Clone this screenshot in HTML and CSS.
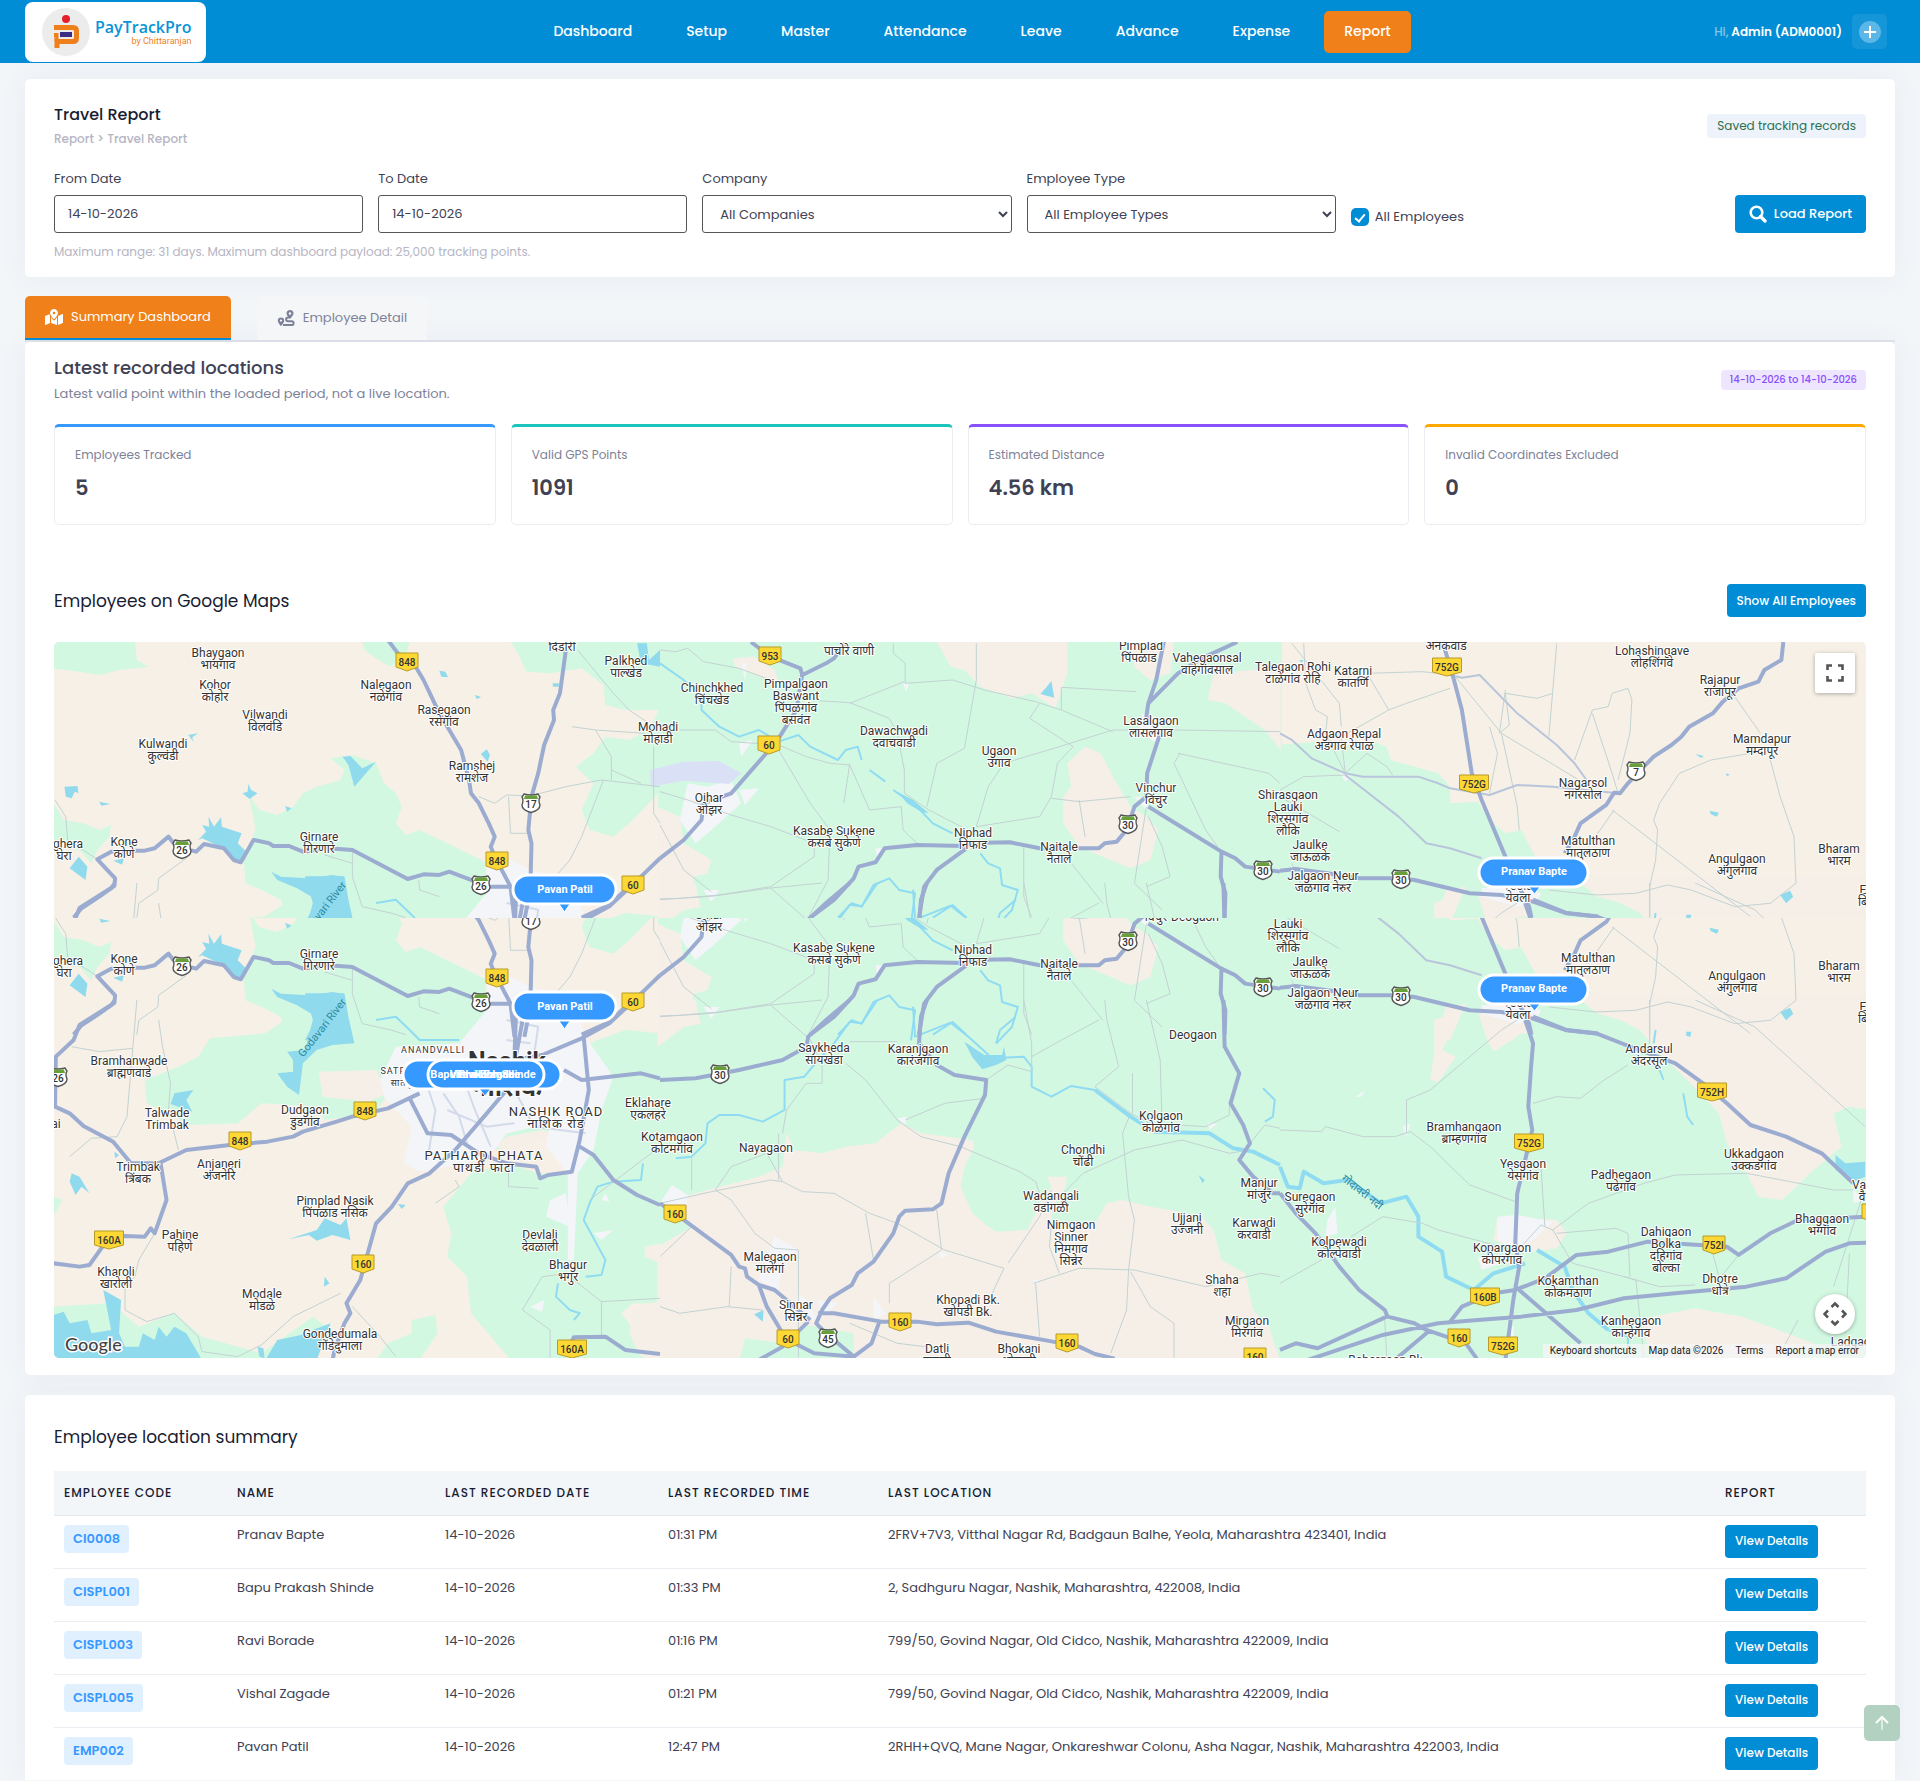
FILE: index.html
```html
<!DOCTYPE html>
<html lang="en">
<head>
<meta charset="utf-8">
<meta name="viewport" content="width=device-width, initial-scale=1">
<title>Travel Report - PayTrackPro</title>
<link rel="stylesheet" href="styles.css">
</head>
<body>
<header class="topbar">
  <a class="brand" href="#" aria-label="PayTrackPro">
    <svg class="brand-mark" width="48" height="48" viewBox="0 0 48 48" aria-hidden="true">
      <circle cx="24" cy="24" r="24" fill="#ececec"/>
      <circle cx="24" cy="11" r="4" fill="#e5202b"/>
      <path d="M12 19.500H31Q34.500 19.500 34.500 23V30Q34.500 33.500 31 33.500H15V40" fill="none" stroke="#ef7f1a" stroke-width="5"/>
      <path d="M12 27H14.500V33" fill="none" stroke="#ef7f1a" stroke-width="4"/>
      <rect x="18" y="24" width="12" height="5" fill="#3b2d83"/>
    </svg>
    <span class="brand-text"><span class="brand-name">PayTrackPro</span><span class="brand-by">by Chittaranjan</span></span>
  </a>
  <nav class="menu" aria-label="Main">
    <a href="#">Dashboard</a><a href="#">Setup</a><a href="#">Master</a><a href="#">Attendance</a><a href="#">Leave</a><a href="#">Advance</a><a href="#">Expense</a><a class="active" href="#">Report</a>
  </nav>
  <div class="user">
    <span><span class="hi">Hi,</span> Admin (ADM0001)</span>
    <button class="user-add" type="button" aria-label="Add">
      <svg width="22" height="22" viewBox="0 0 22 22"><circle cx="11" cy="11" r="11" fill="#5cb6e6"/><path d="M11 5V17M5 11H17" stroke="#fff" stroke-width="2"/></svg>
    </button>
  </div>
</header>

<main>
<section class="card filters">
  <div class="card-head">
    <div>
      <h1>Travel Report</h1>
      <p class="crumbs">Report &gt; Travel Report</p>
    </div>
    <span class="pill pill-saved">Saved tracking records</span>
  </div>
  <form class="filter-grid">
    <div class="field"><label for="from">From Date</label><input id="from" type="text" value="14-10-2026"></div>
    <div class="field"><label for="to">To Date</label><input id="to" type="text" value="14-10-2026"></div>
    <div class="field"><label for="company">Company</label><select id="company"><option>All Companies</option></select></div>
    <div class="field"><label for="etype">Employee Type</label><select id="etype"><option>All Employee Types</option></select></div>
    <div class="filter-actions">
      <label class="check"><input type="checkbox" checked> All Employees</label>
      <button class="btn btn-load" type="button">
        <svg width="18" height="18" viewBox="0 0 18 18" aria-hidden="true"><circle cx="7.500" cy="7.500" r="5.800" fill="none" stroke="#fff" stroke-width="2.600"/><path d="M11.500 11.500L16 16" stroke="#fff" stroke-width="3.400" stroke-linecap="round"/></svg>
        Load Report
      </button>
    </div>
  </form>
  <p class="help">Maximum range: 31 days. Maximum dashboard payload: 25,000 tracking points.</p>
</section>

<div class="tabs" role="tablist">
  <button class="tab tab-active" type="button" role="tab" aria-selected="true">
    <svg width="18" height="16" viewBox="0 0 576 512" aria-hidden="true"><path fill="currentColor" d="M288 0c-69.600 0-126 56.400-126 126 0 56.300 82.400 158.800 113.900 196 6.400 7.500 17.800 7.500 24.200 0C331.600 284.800 414 182.300 414 126 414 56.400 357.600 0 288 0zm0 168a42 42 0 110-84 42 42 0 010 84zM20.100 216A32 32 0 000 245.700V496c0 11.300 11.400 19 21.900 14.900L160 448V214.900c-8.800-16-16.100-31.500-21.300-46.400L20.100 216zM288 359.700c-14.100 0-27.400-6.200-36.500-17-19.700-23.200-40.600-49.600-59.500-76.700v182l192 64V266c-18.900 27.100-39.800 53.500-59.500 76.700a47.900 47.900 0 01-36.500 17zM554.100 161.200L416 224v288l139.900-56A32 32 0 00576 426.300V176c0-11.300-11.400-19-21.900-14.800z"/></svg>
    Summary Dashboard
  </button>
  <button class="tab" type="button" role="tab" aria-selected="false">
    <svg width="18" height="18" viewBox="0 0 18 18" aria-hidden="true"><path fill="currentColor" d="M13 1a3.500 3.500 0 013.500 3.500C16.500 6.500 13 10 13 10S9.500 6.500 9.500 4.500A3.500 3.500 0 0113 1zM4 8.500a3.200 3.200 0 013.200 3.200C7.200 13.800 4 17 4 17S.8 13.800.8 11.700A3.200 3.200 0 014 8.500z"/><circle cx="13" cy="4.500" r="1.200" fill="#f8f8f8"/><circle cx="4" cy="11.600" r="1.100" fill="#f8f8f8"/><path d="M12.500 8.500H11a1.800 1.800 0 000 3.700h3.600a1.900 1.900 0 010 3.900H6" fill="none" stroke="currentColor" stroke-width="2"/></svg>
    Employee Detail
  </button>
</div>

<section class="card summary">
  <div class="card-head">
    <div>
      <h2 class="lead">Latest recorded locations</h2>
      <p class="sub">Latest valid point within the loaded period, not a live location.</p>
    </div>
    <span class="pill pill-range">14-10-2026 to 14-10-2026</span>
  </div>
  <div class="stats">
    <div class="stat stat-blue"><span>Employees Tracked</span><strong>5</strong></div>
    <div class="stat stat-teal"><span>Valid GPS Points</span><strong>1091</strong></div>
    <div class="stat stat-purple"><span>Estimated Distance</span><strong>4.56 km</strong></div>
    <div class="stat stat-amber"><span>Invalid Coordinates Excluded</span><strong>0</strong></div>
  </div>
  <div class="map-head">
    <h3>Employees on Google Maps</h3>
    <button class="btn btn-sm" type="button">Show All Employees</button>
  </div>
  <div class="map">
    <svg class="map-canvas" viewBox="0 0 1812 716" preserveAspectRatio="xMidYMid slice" role="img" aria-label="Map of employee locations around Nashik">
      <defs>
        <g id="y3"><path d="M-11 -9H11V5L0 9L-11 5Z" fill="#fdd835" stroke="#b79a2a"/></g>
        <g id="y4"><path d="M-14.500 -9H14.500V5L0 9L-14.500 5Z" fill="#fdd835" stroke="#b79a2a"/></g>
        <g id="gs"><path d="M-7 -9Q0 -7 7 -9L9 -6Q7 -3 9 2Q9 7 0 9.500Q-9 7 -9 2Q-7 -3 -9 -6Z" fill="#fff" stroke="#555" stroke-width="1.400"/><path d="M-6 -7.500H6L7 -4H-7Z" fill="#689f38"/></g>
        <g id="terrain">
          <rect width="1812" height="620" fill="#f6f0e6"/>
          <g class="green">
            <rect x="604" width="624" height="620"/>
            <rect x="1224" y="240" width="588" height="380"/>
            <g transform="matrix(.3954 0 0 .3333 -14 -12)">
              <path d="M34 34H240L245 90 275 110 200 120 150 135 100 125 34 115ZM815 34H935L925 80 885 110 850 85 820 60ZM1190 34H1570V240L1480 240 1430 225 1425 165 1370 115 1290 130 1230 125 1215 85ZM34 520L60 570 110 580 150 600 180 585 175 620 145 660 130 700 100 660 34 650ZM1430 320L1490 330 1540 300 1570 230V480L1540 520 1490 580 1450 620 1390 600 1370 540 1400 460 1355 410 1400 370Z"/>
              <path d="M735 385L790 375 850 400 870 460 900 490 915 530 900 580 925 615 960 600 1030 640 1125 695 1130 790 1120 900H630L610 810 570 785 520 760 515 690 545 600 530 500 555 540 600 555 640 530 665 490 700 470 760 450 770 420Z"/>
            </g>
            <g transform="matrix(.3954 0 0 .3333 -14 241)">
              <path d="M600 -20L620 60 570 100 430 115 400 170 350 200 265 240 270 310 380 375 500 370 560 310 700 320 720 360 850 340 880 280 920 140 1130 60V-20ZM1020 620L1090 520 1180 490 1260 520 1340 520 1350 370 1390 130 1480 90 1570 100V910L1500 910 1470 940 1510 1000 1530 1080H1190L1090 940 1080 830 1030 770 1040 700ZM850 1080L880 1030 940 1000 940 960 1000 945 1005 1000 960 1080ZM34 920L180 910 250 980 340 940 410 1010 560 1060 690 950 735 990 690 1080H34ZM1140 450L1180 400 1290 370 1300 400 1200 440ZM34 590L55 600 34 650Z"/>
            </g>
            <g transform="matrix(.3954 0 0 .3333 1226 -12)">
              <path d="M-6 345L90 335 140 350 240 335 270 350 280 390 400 430 430 470 430 520 500 515 530 570 570 610 610 600 650 690 720 690 790 740 870 810 920 860H-6Z"/>
            </g>
          </g>
          <g class="sand">
            <g transform="matrix(.3954 0 0 .3333 606 -12)"><path d="M700 34H1030V130L1000 235 940 190 890 205 810 170 770 120 735 110ZM185 85L240 80 290 120 300 155 250 140 190 110ZM1075 350L1115 370 1145 440 1190 530 1230 560 1260 600 1240 690 1190 715 1140 690 1060 650 1020 580 1020 500 1040 470 1030 400ZM-6 530L50 560 60 640 130 690 120 730 85 740 80 790 105 830 60 840 -6 900ZM1190 34H1300L1290 130 1240 150 1200 110ZM1400 130L1500 120 1570 110V360L1530 300 1480 260 1430 220 1385 210Z"/></g>
            <g transform="matrix(.3954 0 0 .3333 606 241)"><path d="M-6 0H90L100 60 40 80 -6 130ZM320 400L340 450 410 460 470 440 545 430 610 370 660 400 790 420 795 440 770 500 760 560 790 640 830 680 850 695 930 690 965 600 990 560 980 530 1030 530 1020 580 990 620 990 670 1100 670 1130 610 1170 600 1240 620 1290 630 1370 650 1400 690 1420 780 1480 820 1500 930 1540 980 1568 1080H-6V740L80 680 30 640 60 590 120 570 250 530 310 500Z"/></g>
            <g transform="matrix(.3954 0 0 .3333 -14 241)"><path d="M705 215L850 210 880 280 830 305 715 290ZM1500 930L1570 900V1070H1520L1490 1000ZM1150 440L1180 410 1270 390 1300 400 1200 450ZM1530 740L1568 730V790L1530 770Z"/></g>
            <g transform="matrix(.3954 0 0 .3333 1226 -12)"><path d="M420 780L470 770 430 880H390ZM540 820L610 800 630 860H530Z"/></g>
            <g transform="matrix(.3954 0 0 .3333 1226 241)"><path d="M740 -20H1490V330L1440 320 1400 340 1420 440 1340 520 1270 600 1210 590 1180 520 1130 430 1110 340 1030 240 960 160 910 90 860 60 800 40ZM500 30L620 60 600 110 540 155 520 110ZM390 60L460 30 410 150 445 170 400 245 380 240 390 160ZM900 960L1050 925 1170 950 1350 1030 1300 1080H950ZM550 650L700 660 725 700 700 745 620 760 540 720Z"/></g>
          </g>
          <g transform="matrix(.3954 0 0 .3333 606 241)"><path class="green" d="M200 1080L215 1015 310 1030 370 975 490 1000 490 1080Z"/></g>
          <g class="town">
            <g transform="matrix(.3954 0 0 .3333 -14 241)"><path d="M860 240L900 140 1060 130 1130 30 1130 -60 1190 -70 1240 -40 1350 0 1380 110 1450 230 1420 330 1400 450 1360 520 1350 780 1335 780 1335 520 1280 440 1290 370 1180 400 1150 450 1080 490 960 515 920 490 940 380 870 290ZM1290 600L1330 580 1340 680 1280 650ZM1240 920L1275 900 1270 935ZM1420 600L1430 580 1440 605ZM1400 700L1450 690 1420 720Z"/></g>
            <g transform="matrix(.3954 0 0 .3333 606 -12)"><path d="M70 460L120 470 180 450 205 520 130 600 90 640 50 570ZM200 480L250 475 215 525ZM200 340L235 330 205 380ZM205 100L220 100 215 150ZM110 780L150 780 130 815ZM545 655L570 655 550 690ZM1220 250L1275 270 1260 340 1210 310ZM1200 500L1240 500 1230 540ZM615 160L630 160 622 185Z"/></g>
            <g transform="matrix(.3954 0 0 .3333 606 241)"><path d="M30 555L70 585 65 630 0 610ZM290 710L350 750 310 780 300 870 250 840ZM350 880L370 900 400 960 330 960ZM400 900L450 910 410 950ZM540 890L570 940 540 960ZM600 355L625 350 620 375ZM705 750L730 765 710 775ZM1385 370L1410 370 1390 390ZM945 840L960 840 950 860Z"/></g>
            <g transform="matrix(.3954 0 0 .3333 1226 -12)"><path d="M510 775L600 765 660 790 650 815 600 830 510 800ZM150 425L180 440 165 455Z"/></g>
            <g transform="matrix(.3954 0 0 .3333 1226 241)"><path d="M550 650L600 645 690 665 640 720 600 750 550 720ZM120 660L140 620 145 700 115 710ZM310 380L330 370 320 410ZM575 980L592 980 590 1030 572 1040ZM1450 570L1480 600 1450 610ZM190 290L215 272 205 290ZM500 770L560 790 510 810Z"/></g>
          </g>
          <g class="water">
            <g transform="matrix(.3954 0 0 .3333 -14 -12)"><path d="M400 630L420 605 410 585 428 590 426 560 440 590 458 562 460 590 510 610 500 640 522 665 508 695 480 680 455 650 410 625ZM765 380L785 378 815 415 850 395 795 470 780 405ZM512 490L525 485 527 462 534 480 550 490 530 507ZM62 470L95 468 97 490 88 485 80 505 65 500ZM150 515L178 522 155 527ZM75 715L98 680 120 710 115 750ZM185 692L212 685 208 704ZM585 725L610 740 680 745 740 735 768 740 775 800 790 880H670L700 810 650 775 600 750ZM620 528L636 535 625 545ZM1010 122L1025 125 1032 142 1015 140ZM1100 195L1115 200 1105 208ZM1115 372L1130 358 1138 375 1132 395ZM1510 40H1535L1540 90 1568 60V110L1520 100ZM1297 160H1312V170H1297ZM375 315L400 310 385 322 388 335Z"/></g>
            <g transform="matrix(.3954 0 0 .3333 -14 241)"><path d="M670 -20H770L780 50 795 130 740 135 700 150 665 190 655 285 625 260 600 220 640 215 640 180 625 155 670 150 690 60ZM340 280L388 270 370 300 385 335 330 312ZM80 520L100 530 125 580 105 560 90 585 75 545ZM628 718L700 690 720 655 760 675 775 655 785 720 740 705 700 722 680 705ZM34 945L60 935 75 970 120 960 130 1000 180 990 160 870 205 900 200 1000 215 1040 250 1040 260 1000 290 1020 300 980 320 1010 340 980 370 1000 385 1030 410 1080H34ZM570 1080L600 1020 660 1005 690 990 735 970 700 1080ZM550 1040L565 1045 568 1075 555 1070ZM905 612L925 615 915 627ZM720 830L732 850 718 860ZM188 455L200 465 190 475Z"/></g>
            <g transform="matrix(.3954 0 0 .3333 606 -12)"><path d="M990 153L997 203 962 192 975 175ZM600 485L640 510 680 550 660 545 625 520Z"/></g>
            <g transform="matrix(.3954 0 0 .3333 606 241)"><path d="M770 125L820 165 865 165 870 140 876 180 850 195 815 208 790 172ZM238 943L262 930 260 965ZM1362 525L1378 540 1372 550Z"/></g>
            <g transform="matrix(.3954 0 0 .3333 1226 -12)"><path d="M1050 372L1072 378 1065 384ZM1086 542L1110 548 1105 560 1090 553ZM1128 430L1138 434 1130 439ZM1265 795L1290 782 1298 800 1280 820ZM48 90L60 90 55 98Z"/></g>
            <g transform="matrix(.3954 0 0 .3333 1226 241)"><path d="M1405 465L1430 490 1480 485V530L1450 545 1405 510ZM1027 95L1040 95 1038 110 1028 108Z"/></g>
          </g>
          <g transform="matrix(.3954 0 0 .3333 606 -12)"><path fill="#dae1f7" d="M-24 420L60 395 150 393 205 430 175 462 60 452 -24 470Z"/></g>
          <g class="river">
            <g transform="matrix(.3954 0 0 .3333 606 -12)"><path d="M0 100L60 150 105 200 105 240 150 290 200 320 250 300 300 335 350 315 380 350 450 390 470 360 500 350 510 390M530 420L570 455M590 480L650 530 690 580 740 610M810 670L830 700 860 715 865 765 905 780 890 840 850 890M450 863L485 820 510 830 540 765 580 745 605 780 645 790 635 880M690 863L740 825 775 863"/></g>
            <g transform="matrix(.3954 0 0 .3333 606 241)"><path d="M640 20L645 110 735 68 780 110 840 175 920 170 940 200 940 260 990 290 1040 258 1100 270M550 0L510 70 480 65 440 130 400 180 365 230 315 240 315 330 260 365 200 345 150 345 120 370 115 430 80 470 40 475M850 130L860 90 900 50M1525 265L1555 300 1550 350 1530 365"/><path class="wide" d="M1100 270L1190 350 1250 395 1390 400 1450 445 1500 455 1568 495"/></g>
            <g transform="matrix(.3954 0 0 .3333 1226 241)"><path class="wide" d="M0 500L20 560 50 565 60 515 110 550 170 540 255 610 320 590 350 650 350 710 410 755 420 830 490 870 540 820 620 790M650 750L720 800 740 870 780 940 830 990"/><path d="M830 990L880 1010 880 1040M1020 280L1030 350 1045 375M950 90L945 130M960 210L970 240"/></g>
            <g transform="matrix(.3954 0 0 .3333 -14 241)"><path d="M1525 490L1520 540 1450 545 1410 560 1390 610 1375 660 1430 780 1420 825 1380 830M1310 850L1305 890 1340 930 1365 940 1350 960M850 60L900 50 935 90 960 120 1060 120"/></g>
          </g>
          <g class="minor">
            <g transform="matrix(.3954 0 0 .3333 -14 -12)"><path d="M38 510L65 560 70 630 145 688M370 685L300 745 298 780 250 820 245 863M1360 60L1450 190 1490 240 1540 280M1110 500L1150 520 1180 495 1240 498 1330 470 1420 450 1568 470M1185 500L1190 610 1235 610M1425 450L1370 620 1340 690 1300 745M1345 290L1405 300 1530 310M1405 300L1445 380 1445 450M1445 420L1520 460M1552 350V550L1568 580M790 665L790 740 815 830 890 850 925 863M720 675L790 700M958 750L960 780 1010 800"/></g>
            <g transform="matrix(.3954 0 0 .3333 606 -12)"><path d="M0 60L40 65 70 55 110 95 200 115 280 150M590 40V70L620 100 620 160 740 150 820 180 950 215 1015 240 1145 305M400 212L480 218 580 265 600 310 618 420 618 490 680 540 770 595M618 155L480 220M800 40V150L770 355 700 400 675 530M1015 240V172L1205 185M1045 350L935 265 960 220M1045 350L1005 400 990 500 960 560 800 590 830 470 870 400 1010 350 1145 300 1310 300 1568 305M990 505L1060 515 1190 500M1060 510L1075 620M50 300L140 300 180 335 300 345 370 380 430 400 480 405 530 540 610 530 615 600 650 640M480 400L465 520M300 360L380 520 430 600 425 750 375 863M0 485L70 510 180 555 280 590 390 640V680L280 770 150 795 50 805 0 807M0 585L60 720 130 785M920 650V800L940 863M1040 700L1120 820M1315 370L1300 400 1380 600 1410 650M1310 370L1540 430 1568 460M1230 530L1200 760 1270 840M1235 560L1270 650 1290 740 1230 770"/></g>
            <g transform="matrix(.3954 0 0 .3333 1226 -12)"><path d="M60 40L65 160 90 240 120 260 115 310 165 430 155 320 275 240 220 130 360 125 435 135M275 240L320 220 430 175M30 40L150 220 155 290M440 135L560 310 770 460M560 310L600 530 605 600M700 40L690 180 680 320M790 240L745 390M790 250L840 430 855 490M790 240L830 230 840 190 880 175 890 210 885 310 855 450M570 180L555 310 580 285 570 190 650 205 690 190M530 290L550 370 530 490M165 430L220 370 270 410 285 435M165 435L60 440 0 480M845 540L780 650M840 540L1190 860M955 600L945 570 960 520 1010 430 1090 390 1190 370M1240 390L1265 500 1300 620 1305 760 1240 820 1150 830 1040 780 980 765 900 790 800 795 680 780M955 600L950 690 935 770 935 863M1150 200L1215 310M0 500L150 605M30 700L60 780"/></g>
            <g transform="matrix(.3954 0 0 .3333 -14 241)"><path d="M300 60L310 140 330 250 325 330 350 450M245 0L235 140 220 350 195 410 130 415 75 470M80 140L150 155 235 145M290 700L250 780 240 830 215 860 215 930 270 965 340 940 400 1010 410 1055 500 1070 560 1035 640 950 760 880M1340 820L1270 830 1220 930 1290 990 1290 1075M1340 830L1420 905 1568 895M1420 905V1010M1185 500V560L1260 565M1050 540L1060 560 1000 610M790 920L860 1010 900 1070M1390 600L1568 440"/></g>
            <g transform="matrix(.3954 0 0 .3333 606 241)"><path d="M0 50L130 40 280 15 410 0M280 15L380 120 410 190V250H370L320 330 310 400M470 190L520 240 600 360 660 410 760 440 910 515 950 545 960 580M620 360L720 310 820 295M480 125L600 125M825 240L880 195 940 215V130L920 0M940 170L1000 130 1110 60M1125 0L1130 60 1160 200 1100 260 1190 340 1170 400 1185 590 1200 660 1185 810 1180 930 1140 1060M1230 0L1265 180 1270 380M1190 340L1240 370 1380 380 1440 345V300M1020 580L1070 520 1200 450 1320 420 1440 460 1490 450M0 610L130 575 280 540 310 545 360 575 440 580 530 640 600 670 720 750 870 805 840 880M310 545L270 460 180 500 140 570 180 600 240 700 290 745 350 750M300 540V400M520 640L540 780M700 630L712 750 580 850 580 910M880 790L960 650 990 570M990 670L985 740 1010 820M945 850L1060 805 1200 810 1380 860 1520 820 1568 830M950 850L960 1010M1190 815L1240 920 1300 970V1073M350 750L350 1073M180 800L175 920M0 920L50 940 170 920 260 930M80 470L80 570M0 770L80 680M480 970L540 1000 600 1030 670 1040M1492 430L1530 375 1568 385M1195 220V340"/></g>
            <g transform="matrix(.3954 0 0 .3333 1226 241)"><path d="M0 390L105 395 115 380 210 410 290 410 330 395 380 440 480 555 595 605M320 400V300L380 270 440 210 560 90 600 60M640 310L700 290 760 295 820 240 880 195M690 690L780 610 920 550 1000 525 1180 520 1400 570 1450 570M105 780L0 850M180 710L260 650 360 670 400 690 590 750M610 740L660 675 690 690M690 690L740 790 870 830 900 840 910 950 920 1073M870 830L960 860 1050 855M1090 740L1110 830M1160 765L1115 830M1470 600L1400 860M1440 760L1430 1000M935 0V130M700 700L850 685 880 700 885 830M1310 960L1260 1073M1050 0L1200 80 1480 380M265 960L270 1073M660 500L670 680"/></g>
          </g>
          <g class="medium">
            <g transform="matrix(.3954 0 0 .3333 1226 -12)"><path d="M430 135L460 143 505 135 600 250 700 345 745 400 775 450M0 310L30 330 80 385 165 430 210 440 350 440 400 460 430 475 530 495 600 465 690 470 855 490M165 435L300 560 370 640 430 655 510 685"/></g>
            <g transform="matrix(.3954 0 0 .3333 -14 241)"><path class="street" d="M1020 280L1060 350 1080 430M1060 200L1100 330 1140 440M1180 60L1260 80 1250 160M1030 330L1130 380 1200 370M1180 120L1240 130M1200 270L1250 380 1380 400M980 260L1000 330 980 480"/></g>
          </g>
          <g class="major">
            <g transform="matrix(.3954 0 0 .3333 -14 -12)"><path d="M880 30L905 70 950 110 970 150 990 200 1010 250 1040 310 1065 360 1085 450 1090 490 1110 520 1135 580 1150 620 1140 650 1150 680 1190 770 1200 870M1330 60L1315 190 1298 240 1300 270 1275 345 1260 430 1243 500 1235 600 1243 640 1240 780 1225 870M85 863L105 835 150 800 188 768 190 745 145 688 180 665 240 662 265 662 290 655 325 620 345 650 395 665 415 642 465 655 490 690 508 697 540 630 580 640 590 648 630 648 665 665 730 655 790 660 930 747 970 733 1010 735 1035 725 1090 750 1130 770 1190 770M1370 863L1440 825 1480 780 1520 740 1568 685"/></g>
            <g transform="matrix(.3954 0 0 .3333 606 -12)"><path d="M0 685L60 630 105 570 110 520 180 490 265 375 300 325 345 240 360 130M230 36L280 80 355 115 360 135 420 100 440 85 470 36M380 863L440 810 490 745 502 710 545 697 568 655 650 645 770 648 820 638 885 637 960 655 1060 655 1110 655 1125 640 1155 635 1180 600 1200 530 1230 500 1232 430 1265 310 1230 260 1235 220 1255 150 1275 30M1235 220L1310 130 1370 85 1460 36M655 863L668 770 700 720 775 655M1235 530L1290 570 1420 665 1455 685 1480 710 1568 725M1420 665L1418 740 1430 790 1428 863"/></g>
            <g transform="matrix(.3954 0 0 .3333 1226 -12)"><path d="M410 30L440 150 460 240 485 430 510 510 570 680 600 760 630 830 636 863M0 722L40 717 120 730 200 745 300 745 340 750 480 790 560 795 640 815 725 850 805 860M1273 36L1268 90 1225 120 1210 155 1160 175 1120 215 1095 250 1035 290 1015 320 990 345 945 380 920 410 880 460 860 490 845 488 825 525 760 580 745 620 720 670"/></g>
            <g transform="matrix(.3954 0 0 .3333 -14 241)"><path d="M190 0L180 15 100 75 85 120 40 170 38 320 75 340 110 378 185 425 230 490 300 490 370 450 480 435 575 425 640 410 665 395 750 365 790 350 880 325 960 280M305 490L320 600 290 700 280 685 265 710 215 708 170 720 125 795 100 800 34 790M740 1080L745 1050 770 970 785 940 775 910 810 840 850 670 890 620 930 550 985 520 1050 450 1130 340 1180 270 1200 170 1205 0M935 295L980 400 1040 405 1110 460 1180 490 1255 500 1265 535 1285 525 1345 515 1365 420 1388 270 1375 110M1200 180L1270 165 1370 115 1440 70 1485 20M1230 0L1205 160M1325 210L1370 240 1480 225 1520 220 1568 235M1365 440L1400 465 1450 540 1510 585 1568 615M1345 1025L1350 1012 1430 1010 1480 1050 1568 1062"/></g>
            <g transform="matrix(.3954 0 0 .3333 606 241)"><path d="M0 240L90 235 120 228 200 210 310 180 370 140 375 110 420 60 480 0M675 0L660 50 655 130 700 195 745 225 825 240 822 285 770 410 730 520 712 610 690 628 620 632 605 650 590 700 540 785 500 820 485 855 430 895 410 930 395 970 420 1000 490 1070M0 610L60 660 180 765 200 800 215 805 220 830 250 855 290 870 350 930 380 960M250 855L270 920 310 1000 340 1030 390 1060 490 1070 535 1030 555 965M250 1080L310 1040 375 965M400 940L440 940 560 965 650 965 700 973 780 968 850 995 980 1022 1060 1040 1100 1062 1150 1076M1425 0L1428 140 1465 220 1443 310 1475 375 1492 430 1465 480 1500 530 1550 580 1568 580"/></g>
            <g transform="matrix(.3954 0 0 .3333 1226 241)"><path d="M0 580L40 640 90 700 150 800 200 870 265 930 272 950 340 970 370 990 420 1010 470 1030 500 1080M0 1050L40 1030 95 1045 270 950M70 1080L260 1005 400 970 500 960 610 950 750 930 870 895 1000 880 1180 860 1280 835 1380 755 1440 730 1490 728M620 60L640 130 635 200 628 320 638 390 600 580 595 730 605 800 590 900 570 1080M640 50L725 90 800 100 875 135 1000 190 1070 250 1130 310 1190 375 1280 410 1370 460 1450 550M595 870L670 835 750 765 830 755 930 725 1060 735 1130 740 1160 765 1240 700 1310 660 1490 650M605 870L760 1030M290 1080L380 990M595 870L540 880 460 920 430 965"/></g>
          </g>
        </g>
      </defs>

      <!-- northern tiles -->
      <svg x="0" y="0" width="1812" height="276" viewBox="0 0 1812 276">
        <use href="#terrain"/>
        <g class="shields">
          <use href="#y3" x="353" y="20"/><text x="353" y="24">848</text>
          <use href="#gs" x="477" y="161"/><text x="477" y="166">17</text>
          <use href="#gs" x="128" y="207"/><text x="128" y="212">26</text>
          <use href="#y3" x="443" y="219"/><text x="443" y="223">848</text>
          <use href="#gs" x="427" y="243"/><text x="427" y="248">26</text>
          <use href="#y3" x="579" y="243"/><text x="579" y="247">60</text>
          <use href="#y3" x="716" y="14"/><text x="716" y="18">953</text>
          <use href="#y3" x="715" y="103"/><text x="715" y="107">60</text>
          <use href="#gs" x="1074" y="182"/><text x="1074" y="187">30</text>
          <use href="#gs" x="1209" y="228"/><text x="1209" y="233">30</text>
          <use href="#y4" x="1393" y="25"/><text x="1393" y="29">752G</text>
          <use href="#y4" x="1420" y="142"/><text x="1420" y="146">752G</text>
          <use href="#gs" x="1582" y="129"/><text x="1582" y="134">7</text>
          <use href="#gs" x="1347" y="237"/><text x="1347" y="242">30</text>
        </g>
        <g class="places">
          <text x="164" y="15">Bhaygaon<tspan x="164" dy="12">भायगाव</tspan></text>
          <text x="161" y="47">Kohor<tspan x="161" dy="12">कोहोर</tspan></text>
          <text x="332" y="47">Nalegaon<tspan x="332" dy="12">नळेगांव</tspan></text>
          <text x="211" y="77">Vilwandi<tspan x="211" dy="12">विलवंडि</tspan></text>
          <text x="390" y="72">Rasegaon<tspan x="390" dy="12">रसेगांव</tspan></text>
          <text x="109" y="106">Kulwandi<tspan x="109" dy="12">कुल्वंडी</tspan></text>
          <text x="418" y="128">Ramshej<tspan x="418" dy="12">रामशेज</tspan></text>
          <text x="14" y="206">ghera<tspan x="10" dy="12">घेरा</tspan></text>
          <text x="70" y="204">Kone<tspan x="70" dy="12">कोणे</tspan></text>
          <text x="265" y="199">Girnare<tspan x="265" dy="12">गिरणारे</tspan></text>
          <text x="508" y="9">दिंडोरी</text>
          <text x="572" y="23">Palkhed<tspan x="572" dy="12">पाल्खेड</tspan></text>
          <text x="604" y="89">Mohadi<tspan x="604" dy="12">मोहाडी</tspan></text>
          <text x="658" y="50">Chinchkhed<tspan x="658" dy="12">चिंचखेड</tspan></text>
          <text x="742" y="46">Pimpalgaon<tspan x="742" dy="12">Baswant</tspan><tspan x="742" dy="12">पिंपळगांव</tspan><tspan x="742" dy="12">बसवंत</tspan></text>
          <text x="795" y="13">पाचोरे वाणी</text>
          <text x="840" y="93">Dawachwadi<tspan x="840" dy="12">दवाचवाडी</tspan></text>
          <text x="945" y="113">Ugaon<tspan x="945" dy="12">उगाव</tspan></text>
          <text x="655" y="160">Oihar<tspan x="655" dy="12">ओझर</tspan></text>
          <text x="780" y="193">Kasabe Sukene<tspan x="780" dy="12">कसबे सुकेणे</tspan></text>
          <text x="919" y="195">Niphad<tspan x="919" dy="12">निफाड</tspan></text>
          <text x="1005" y="209">Naitale<tspan x="1005" dy="12">नैताले</tspan></text>
          <text x="1087" y="8">Pimplad<tspan x="1085" dy="12">पिंपळाड</tspan></text>
          <text x="1153" y="20">Vahegaonsal<tspan x="1153" dy="12">वाहेगांवसाल</tspan></text>
          <text x="1097" y="83">Lasalgaon<tspan x="1097" dy="12">लासलगाव</tspan></text>
          <text x="1102" y="150">Vinchur<tspan x="1102" dy="12">विंचुर</tspan></text>
          <text x="1239" y="29">Talegaon Rohi<tspan x="1239" dy="12">टाळेगांव रोहि</tspan></text>
          <text x="1234" y="157">Shirasgaon<tspan x="1234" dy="12">Lauki</tspan><tspan x="1234" dy="12">शिरसगांव</tspan><tspan x="1234" dy="12">लौकि</tspan></text>
          <text x="1299" y="33">Katarni<tspan x="1299" dy="12">कातर्णि</tspan></text>
          <text x="1392" y="8">अनकवाडे</text>
          <text x="1598" y="13">Lohashingave<tspan x="1598" dy="12">लोहशिंगवे</tspan></text>
          <text x="1666" y="42">Rajapur<tspan x="1666" dy="12">राजापूर</tspan></text>
          <text x="1290" y="96">Adgaon Repal<tspan x="1290" dy="12">अडगाव रेपाळ</tspan></text>
          <text x="1708" y="101">Mamdapur<tspan x="1708" dy="12">मम्दापूर</tspan></text>
          <text x="1529" y="145">Nagarsol<tspan x="1529" dy="12">नगरसोल</tspan></text>
          <text x="1256" y="207">Jaulke<tspan x="1256" dy="12">जाऊळके</tspan></text>
          <text x="1269" y="238">Jalgaon Neur<tspan x="1269" dy="12">जळगाव नेरुर</tspan></text>
          <text x="1534" y="203">Matulthan<tspan x="1534" dy="12">मातुलठाण</tspan></text>
          <text x="1683" y="221">Angulgaon<tspan x="1683" dy="12">अंगुलगाव</tspan></text>
          <text x="1785" y="211">Bharam<tspan x="1785" dy="12">भारम</tspan></text>
          <text x="1464" y="248">Yeola<tspan x="1464" dy="12">येवला</tspan></text>
          <text x="1809" y="252">E<tspan x="1809" dy="12">बि</tspan></text>
          <text class="river-name" transform="translate(271 271) rotate(-52)">Godavari River</text>
        </g>
        <g class="pins">
          <rect x="459" y="233" width="103" height="29" rx="15"/><path d="M505 262H516L510.500 270Z"/><text x="511" y="251">Pavan Patil</text>
          <rect x="1425" y="216" width="109" height="29" rx="15"/><path d="M1475 245H1486L1480.500 252Z"/><text x="1480" y="233">Pranav Bapte</text>
        </g>
      </svg>

      <!-- southern tiles -->
      <svg x="0" y="276" width="1812" height="440" viewBox="0 159 1812 440">
        <use href="#terrain"/>
        <g class="shields">
          <use href="#gs" x="477" y="161"/><text x="477" y="166">17</text>
          <use href="#gs" x="128" y="207"/><text x="128" y="212">26</text>
          <use href="#y3" x="443" y="219"/><text x="443" y="223">848</text>
          <use href="#gs" x="427" y="243"/><text x="427" y="248">26</text>
          <use href="#y3" x="579" y="243"/><text x="579" y="247">60</text>
          <use href="#gs" x="1074" y="182"/><text x="1074" y="187">30</text>
          <use href="#gs" x="1209" y="228"/><text x="1209" y="233">30</text>
          <use href="#gs" x="1347" y="237"/><text x="1347" y="242">30</text>
          <use href="#y3" x="311" y="352"/><text x="311" y="356">848</text>
          <use href="#y3" x="186" y="382"/><text x="186" y="386">848</text>
          <use href="#y4" x="55" y="481"/><text x="55" y="485">160A</text>
          <use href="#y3" x="309" y="505"/><text x="309" y="509">160</text>
          <use href="#y4" x="518" y="590"/><text x="518" y="594">160A</text>
          <use href="#gs" x="4" y="318"/><text x="4" y="323">26</text>
          <use href="#gs" x="666" y="315"/><text x="666" y="320">30</text>
          <use href="#y3" x="621" y="455"/><text x="621" y="459">160</text>
          <use href="#y3" x="846" y="563"/><text x="846" y="567">160</text>
          <use href="#y3" x="1013" y="584"/><text x="1013" y="588">160</text>
          <use href="#y3" x="734" y="580"/><text x="734" y="584">60</text>
          <use href="#gs" x="774" y="579"/><text x="774" y="584">45</text>
          <use href="#y3" x="1201" y="598"/><text x="1201" y="602">160</text>
          <use href="#y4" x="1475" y="384"/><text x="1475" y="388">752G</text>
          <use href="#y4" x="1658" y="333"/><text x="1658" y="337">752H</text>
          <use href="#y3" x="1660" y="486"/><text x="1660" y="490">752I</text>
          <use href="#y4" x="1431" y="538"/><text x="1431" y="542">160B</text>
          <use href="#y3" x="1405" y="579"/><text x="1405" y="583">160</text>
          <use href="#y4" x="1449" y="587"/><text x="1449" y="591">752G</text>
          <use href="#y3" x="1819" y="454"/>
        </g>
        <g class="places">
          <text x="14" y="206">ghera<tspan x="10" dy="12">घेरा</tspan></text>
          <text x="70" y="204">Kone<tspan x="70" dy="12">कोणे</tspan></text>
          <text x="265" y="199">Girnare<tspan x="265" dy="12">गिरणारे</tspan></text>
          <text x="655" y="160">Oihar<tspan x="655" dy="12">ओझर</tspan></text>
          <text x="780" y="193">Kasabe Sukene<tspan x="780" dy="12">कसबे सुकेणे</tspan></text>
          <text x="919" y="195">Niphad<tspan x="919" dy="12">निफाड</tspan></text>
          <text x="1005" y="209">Naitale<tspan x="1005" dy="12">नैताले</tspan></text>
          <text x="1102" y="162">विंचुर</text>
          <text x="1141" y="162">Deogaon</text>
          <text x="1234" y="169">Lauki<tspan x="1234" dy="12">शिरसगांव</tspan><tspan x="1234" dy="12">लौकि</tspan></text>
          <text x="1256" y="207">Jaulke<tspan x="1256" dy="12">जाऊळके</tspan></text>
          <text x="1269" y="238">Jalgaon Neur<tspan x="1269" dy="12">जळगाव नेरुर</tspan></text>
          <text x="1534" y="203">Matulthan<tspan x="1534" dy="12">मातुलठाण</tspan></text>
          <text x="1683" y="221">Angulgaon<tspan x="1683" dy="12">अंगुलगाव</tspan></text>
          <text x="1785" y="211">Bharam<tspan x="1785" dy="12">भारम</tspan></text>
          <text x="1464" y="248">Yeola<tspan x="1464" dy="12">येवला</tspan></text>
          <text x="1809" y="252">E<tspan x="1809" dy="12">बि</tspan></text>
          <text x="75" y="306">Bramhanwade<tspan x="75" dy="12">ब्राह्मणवाडे</tspan></text>
          <text x="113" y="358">Talwade<tspan x="113" dy="12">Trimbak</tspan></text>
          <text x="251" y="355">Dudgaon<tspan x="251" dy="12">डुडगांव</tspan></text>
          <text x="84" y="412">Trimbak<tspan x="84" dy="12">त्रिंबक</tspan></text>
          <text x="165" y="409">Anjaneri<tspan x="165" dy="12">अंजनेरि</tspan></text>
          <text x="281" y="446">Pimplad Nasik<tspan x="281" dy="12">पिंपळाड नसिक</tspan></text>
          <text x="126" y="480">Pahine<tspan x="126" dy="12">पहिणे</tspan></text>
          <text x="62" y="517">Kharoli<tspan x="62" dy="12">खारोली</tspan></text>
          <text x="208" y="539">Modale<tspan x="208" dy="12">मोडळे</tspan></text>
          <text x="286" y="579">Gondedumala<tspan x="286" dy="12">गोंडेदुमाला</tspan></text>
          <text x="2" y="369">ai</text>
          <text class="district small" x="379" y="294">ANANDVALLI</text>
          <text class="district small" x="346" y="315">SATPUR<tspan x="350" dy="12">सातपूर</tspan></text>
          <text class="city" x="453" y="311">Nashik<tspan x="453" dy="26">नाशिक</tspan></text>
          <text class="district" x="502" y="357">NASHIK ROAD<tspan x="502" dy="12">नाशिक रोड</tspan></text>
          <text class="district" x="430" y="401">PATHARDI PHATA<tspan x="430" dy="12">पाथर्डी फाटा</tspan></text>
          <text x="486" y="480">Devlali<tspan x="486" dy="12">देवळाली</tspan></text>
          <text x="514" y="510">Bhagur<tspan x="514" dy="12">भगुर</tspan></text>
          <text x="594" y="348">Eklahare<tspan x="594" dy="12">एकलहरे</tspan></text>
          <text x="618" y="382">Kotamgaon<tspan x="618" dy="12">कोटमगांव</tspan></text>
          <text x="770" y="293">Saykheda<tspan x="770" dy="12">सायखेडा</tspan></text>
          <text x="864" y="294">Karanjgaon<tspan x="864" dy="12">कारंजगाव</tspan></text>
          <text x="712" y="393">Nayagaon</text>
          <text x="1029" y="395">Chondhi<tspan x="1029" dy="12">चोंढी</tspan></text>
          <text x="1107" y="361">Kolgaon<tspan x="1107" dy="12">कोळगांव</tspan></text>
          <text x="1139" y="280">Deogaon</text>
          <text x="997" y="441">Wadangali<tspan x="997" dy="12">वडांगळी</tspan></text>
          <text x="1017" y="470">Nimgaon<tspan x="1017" dy="12">Sinner</tspan><tspan x="1017" dy="12">निमगाव</tspan><tspan x="1017" dy="12">सिन्नेर</tspan></text>
          <text x="1133" y="463">Ujjani<tspan x="1133" dy="12">उज्जनी</tspan></text>
          <text x="1200" y="468">Karwadi<tspan x="1200" dy="12">करवाडी</tspan></text>
          <text x="1205" y="428">Manjur<tspan x="1205" dy="12">मांजुर</tspan></text>
          <text x="716" y="502">Malegaon<tspan x="716" dy="12">मालेगां</tspan></text>
          <text x="742" y="550">Sinnar<tspan x="742" dy="12">सिन्नर</tspan></text>
          <text x="914" y="545">Khopadi Bk.<tspan x="914" dy="12">खोपडी Bk.</tspan></text>
          <text x="1168" y="525">Shaha<tspan x="1168" dy="12">शहा</tspan></text>
          <text x="1193" y="566">Mirgaon<tspan x="1193" dy="12">मिरगांव</tspan></text>
          <text x="883" y="594">Datli<tspan x="883" dy="12">दातली</tspan></text>
          <text x="965" y="594">Bhokani<tspan x="965" dy="12">भोकानी</tspan></text>
          <text x="1256" y="442">Suregaon<tspan x="1256" dy="12">सुरेगांव</tspan></text>
          <text x="1410" y="372">Bramhangaon<tspan x="1410" dy="12">ब्राम्हणगांव</tspan></text>
          <text x="1469" y="409">Yesgaon<tspan x="1469" dy="12">येसगांव</tspan></text>
          <text x="1567" y="420">Padhegaon<tspan x="1567" dy="12">पढेगाव</tspan></text>
          <text x="1700" y="399">Ukkadgaon<tspan x="1700" dy="12">उक्कडगांव</tspan></text>
          <text x="1595" y="294">Andarsul<tspan x="1595" dy="12">अंदरसूल</tspan></text>
          <text x="1285" y="487">Kolpewadi<tspan x="1285" dy="12">कोल्पेवाडी</tspan></text>
          <text x="1448" y="493">Kopargaon<tspan x="1448" dy="12">कोपरगाव</tspan></text>
          <text x="1514" y="526">Kokamthan<tspan x="1514" dy="12">कोकमठाण</tspan></text>
          <text x="1612" y="477">Dahigaon<tspan x="1612" dy="12">Bolka</tspan><tspan x="1612" dy="12">दहिगांव</tspan><tspan x="1612" dy="12">बोल्का</tspan></text>
          <text x="1666" y="524">Dhotre<tspan x="1666" dy="12">धोत्रे</tspan></text>
          <text x="1577" y="566">Kanhegaon<tspan x="1577" dy="12">कान्हेगाव</tspan></text>
          <text x="1768" y="464">Bhaggaon<tspan x="1768" dy="12">भग्गांव</tspan></text>
          <text x="1800" y="587">Ladgaon</text>
          <text x="1805" y="430">Va<tspan x="1808" dy="12">वै</tspan></text>
          <text x="1333" y="605">Babargaon Bk.</text>
          <text class="river-name" transform="translate(271 271) rotate(-52)">Godavari River</text>
          <text class="river-name" transform="translate(1306 436) rotate(38)">गोदावरी नदी</text>
        </g>
        <g class="pins">
          <rect x="459" y="233" width="103" height="29" rx="15"/><path d="M505 262H516L510.500 270Z"/><text x="511" y="251">Pavan Patil</text>
          <rect x="1425" y="216" width="109" height="29" rx="15"/><path d="M1475 245H1486L1480.500 252Z"/><text x="1480" y="233">Pranav Bapte</text>
          <rect x="349" y="301" width="158" height="29" rx="15"/><rect x="374" y="301" width="116" height="29" rx="15"/>
          <text x="429" y="319">Bapu Prakash Shinde</text><text x="431" y="319">Vishal Zagade</text><text x="431" y="319">Ravi Borade</text><path d="M425.500 330H436.500L431 337Z"/>
        </g>
      </svg>
      <text class="google" x="11" y="709">Google</text>
    </svg>
    <button class="map-full" type="button" aria-label="Toggle fullscreen view"><svg width="18" height="18" viewBox="0 0 18 18"><path d="M1.500 6V1.500H6M12 1.500H16.500V6M16.500 12V16.500H12M6 16.500H1.500V12" fill="none" stroke="#555" stroke-width="2.600"/></svg></button>
    <button class="map-pan" type="button" aria-label="Map camera controls"><svg width="24" height="24" viewBox="0 0 24 24"><path d="M8.500 5L12 1.500 15.500 5M8.500 19L12 22.500 15.500 19M5 8.500L1.500 12 5 15.500M19 8.500L22.500 12 19 15.500" fill="none" stroke="#555" stroke-width="2.600"/></svg></button>
    <div class="map-credits"><button type="button">Keyboard shortcuts</button><span>Map data ©2026</span><a href="#">Terms</a><a href="#">Report a map error</a></div>
  </div>
</section>

<section class="card listing">
  <h3>Employee location summary</h3>
  <table>
    <colgroup><col class="c-code"><col class="c-name"><col class="c-date"><col class="c-time"><col class="c-loc"><col class="c-rep"></colgroup>
    <thead><tr><th scope="col">Employee Code</th><th scope="col">Name</th><th scope="col">Last Recorded Date</th><th scope="col">Last Recorded Time</th><th scope="col">Last Location</th><th scope="col">Report</th></tr></thead>
    <tbody>
      <tr><td><span class="code">CI0008</span></td><td>Pranav Bapte</td><td>14-10-2026</td><td>01:31 PM</td><td>2FRV+7V3, Vitthal Nagar Rd, Badgaun Balhe, Yeola, Maharashtra 423401, India</td><td><button class="btn btn-sm" type="button">View Details</button></td></tr>
      <tr><td><span class="code">CISPL001</span></td><td>Bapu Prakash Shinde</td><td>14-10-2026</td><td>01:33 PM</td><td>2, Sadhguru Nagar, Nashik, Maharashtra, 422008, India</td><td><button class="btn btn-sm" type="button">View Details</button></td></tr>
      <tr><td><span class="code">CISPL003</span></td><td>Ravi Borade</td><td>14-10-2026</td><td>01:16 PM</td><td>799/50, Govind Nagar, Old Cidco, Nashik, Maharashtra 422009, India</td><td><button class="btn btn-sm" type="button">View Details</button></td></tr>
      <tr><td><span class="code">CISPL005</span></td><td>Vishal Zagade</td><td>14-10-2026</td><td>01:21 PM</td><td>799/50, Govind Nagar, Old Cidco, Nashik, Maharashtra 422009, India</td><td><button class="btn btn-sm" type="button">View Details</button></td></tr>
      <tr><td><span class="code">EMP002</span></td><td>Pavan Patil</td><td>14-10-2026</td><td>12:47 PM</td><td>2RHH+QVQ, Mane Nagar, Onkareshwar Colonu, Asha Nagar, Nashik, Maharashtra 422003, India</td><td><button class="btn btn-sm" type="button">View Details</button></td></tr>
    </tbody>
  </table>
</section>
</main>
<a class="to-top" href="#" aria-label="Scroll to top"><svg width="16" height="16" viewBox="0 0 16 16"><path d="M8 15V4" stroke="#dcebe3" stroke-width="2"/><path d="M2 8L8 2L14 8" fill="none" stroke="#fff" stroke-width="2"/></svg></a>
</body>
</html>
```
FILE: styles.css
```css
* { box-sizing: border-box; }
body { margin: 0; background: #f2f6f9; color: #3f4254; font-family: Poppins, Inter, "Noto Sans", sans-serif; font-size: 13px; line-height: 20px; }
h1, h2, h3, p { margin: 0; font-weight: 500; }
button, input, select { font-family: inherit; font-size: 13px; color: inherit; }
button { cursor: pointer; }
a { color: inherit; text-decoration: none; }

.topbar { display: flex; align-items: center; height: 63px; padding: 0 33px 0 25px; background: #008dd5; color: #fff; }
.brand { display: flex; align-items: center; gap: 5px; width: 181px; height: 60px; padding-left: 17px; background: #fff; border-radius: 8px; }
.brand-text { display: flex; flex-direction: column; align-items: flex-end; }
.brand-name { color: #0a93d6; font-family: "Open Sans", sans-serif; font-size: 16px; line-height: 18px; font-weight: 600; }
.brand-by { color: #ef7f1a; font-family: Roboto, sans-serif; font-size: 9px; line-height: 10px; }
.menu { display: flex; flex: 1; justify-content: center; gap: 14px; padding-left: 24px; }
.menu a { padding: 10px 20px 12px; border-radius: 5px; font-size: 14px; line-height: 20px; font-weight: 500; }
.menu .active { background: #f08019; }
.user { display: flex; align-items: center; gap: 10px; font-size: 12px; font-weight: 600; }
.hi { color: #7fc6ea; font-weight: 500; }
.user-add { display: grid; place-items: center; width: 35px; height: 35px; padding: 0; border: 0; border-radius: 5px; background: #1496d9; }

main { padding: 16px 25px 0; }
.card { background: #fff; border-radius: 5px; box-shadow: 0 0 30px rgba(82, 63, 105, .06); padding: 0 29px; }
.card-head, .map-head { display: flex; align-items: center; justify-content: space-between; }
h1, h3 { color: #181c32; font-size: 17px; line-height: 24px; }
h1 { font-size: 16px; }
h3 { font-weight: 400; -webkit-text-stroke: 0; }
.crumbs { color: #b5b5c3; font-size: 12px; line-height: 20px; padding-top: 2px; }
.pill { border-radius: 4px; line-height: 20px; }
.pill-saved { padding: 2px 10px; background: #eef2fb; color: #2a7150; font-size: 12px; }
.pill-range { padding: 0 9px; background: #eee5ff; color: #8950fc; font-size: 10px; font-weight: 500; }

.filters { padding-top: 24px; padding-bottom: 15px; }
.filter-grid { display: grid; grid-template-columns: 3fr 3fr 3fr 3fr 5fr; gap: 15px; padding-top: 20px; }
.field { display: flex; flex-direction: column; gap: 6px; min-width: 0; }
.field input, .field select { width: 100%; height: 38px; border: 1px solid #555; border-radius: 3px; background: #fff; }
.field input { padding: 0 13px; }
.field select { padding: 0 0 0 13px; }
.filter-actions { display: flex; justify-content: space-between; align-items: flex-end; }
.check { display: flex; align-items: center; gap: 6px; padding-bottom: 6px; }
.check input { appearance: none; width: 18px; height: 18px; margin: 0; border-radius: 5px; background: #008dd5; display: grid; place-items: center; }
.check input::before { content: ""; width: 4px; height: 8px; border: solid #fff; border-width: 0 2px 2px 0; transform: rotate(40deg); }
.btn { display: inline-flex; align-items: center; justify-content: center; border: 0; border-radius: 4px; background: #008dd5; color: #fff; font-weight: 500; }
.btn-load { gap: 7px; height: 38px; width: 131px; padding: 0; }
.btn-sm { height: 33px; padding: 0 10px; font-size: 12px; }
.help { color: #b5b5c3; font-size: 12px; font-weight: 400; padding-top: 9px; }

.tabs { display: flex; gap: 26px; margin-top: 19px; border-bottom: 2px solid #dfe3ec; }
.tab { display: flex; align-items: center; gap: 8px; height: 44px; padding: 0 20px; border: 0; border-radius: 5px 5px 0 0; background: #f5f6f8; color: #7e8299; }
.tab-active { background: #f08019; color: #fff; border-bottom: 2px solid #008dd5; }

.summary { padding-top: 14px; padding-bottom: 17px; }
.lead { font-size: 18px; line-height: 24px; color: #3f4254; }
.sub { color: #7e8299; font-weight: 400; padding-top: 4px; }
.stats { display: grid; grid-template-columns: repeat(4, 1fr); gap: 15px; padding-top: 20px; }
.stat { display: flex; flex-direction: column; gap: 9px; height: 101px; padding: 18px 20px; border: 1px solid #ebedf3; border-top: 3px solid; border-radius: 5px; }
.stat span { color: #7e8299; font-size: 12px; line-height: 20px; }
.stat strong { font-size: 21px; line-height: 28px; font-weight: 600; }
.stat-blue { border-top-color: #3699ff; }
.stat-teal { border-top-color: #1bc5bd; }
.stat-purple { border-top-color: #8950fc; }
.stat-amber { border-top-color: #ffa800; }
.map-head { padding: 59px 0 25px; }

.map { position: relative; height: 716px; overflow: hidden; border-radius: 5px; }
.map-canvas { display: block; width: 100%; height: 100%; }
.green { fill: #d3f8e2; }
.sand { fill: #f6efe8; }
.town { fill: #f4f5f9; }
.water { fill: #90daee; }
.river, .minor, .medium, .major { fill: none; stroke-linejoin: round; }
.river path, .minor path, .medium path, .major path { vector-effect: non-scaling-stroke; }
.river { stroke: #8fdcf2; stroke-width: 2px; }
.river .wide { stroke-width: 4px; }
.minor { stroke: #c3d2d3; stroke-width: 1px; }
.medium { stroke: #b9c5da; stroke-width: 2px; }
.medium .street { stroke: #d3daea; }
.major { stroke: #9bacd0; stroke-width: 4px; }
.places text { font-family: Roboto, "Noto Sans Devanagari", "Noto Sans", sans-serif; font-size: 12px; text-anchor: middle; fill: #333; stroke: #fff; stroke-width: 2px; stroke-linejoin: round; paint-order: stroke; }
.places .district { font-size: 13px; letter-spacing: 1px; }
.places .small { font-size: 9px; }
.places .city { font-size: 25px; font-weight: 700; }
.places .river-name { fill: #2a8a9e; stroke: none; font-size: 11px; }
.shields text { font-family: Roboto, sans-serif; font-size: 10px; font-weight: 500; text-anchor: middle; fill: #333; }
.pins rect { fill: #3699ff; stroke: #fff; stroke-width: 3px; }
.pins path { fill: #3699ff; stroke: #fff; stroke-width: 1px; }
.pins text { font-family: Roboto, sans-serif; font-size: 11px; font-weight: 700; text-anchor: middle; fill: #fff; }
.google { font-family: Lato, sans-serif; font-size: 18px; font-weight: 500; fill: #444; stroke: #fff; stroke-width: 3px; paint-order: stroke; }
.map-full, .map-pan { position: absolute; right: 11px; display: grid; place-items: center; width: 40px; height: 40px; padding: 0; border: 0; background: #fff; box-shadow: 0 1px 4px rgba(0, 0, 0, .3); }
.map-full { top: 11px; border-radius: 2px; }
.map-pan { bottom: 24px; border-radius: 50%; }
.map-credits { position: absolute; right: 0; bottom: 0; display: flex; gap: 12px; padding: 0 7px; background: rgba(245, 245, 245, .75); font-family: Roboto, sans-serif; font-size: 10px; line-height: 14px; color: #222; }
.map-credits button { padding: 0; border: 0; background: none; font-family: inherit; font-size: 10px; line-height: 14px; }

.listing { margin-top: 20px; padding-top: 30px; border-radius: 5px 5px 0 0; }
table { width: 100%; margin-top: 22px; border-collapse: collapse; table-layout: fixed; }
.c-code { width: 173px; }
.c-name { width: 208px; }
.c-date { width: 223px; }
.c-time { width: 220px; }
.c-rep { width: 151px; }
th { height: 44px; padding: 0 10px; background: #f2f6f9; border-bottom: 1px solid #e6eaee; color: #181c32; font-size: 12px; line-height: 16px; font-weight: 500; letter-spacing: 1px; text-align: left; text-transform: uppercase; }
td { height: 53px; padding: 9px 10px; vertical-align: top; border-bottom: 1px solid #ebedf3; }
tbody tr:last-child td { border-bottom: 0; }
.code { display: inline-block; padding: 4px 9px; border-radius: 4px; background: #e1f0ff; color: #3699ff; font-weight: 600; }
.to-top { position: fixed; right: 20px; bottom: 40px; display: grid; place-items: center; width: 36px; height: 36px; border-radius: 5px; background: #b2d1c1; }
```
